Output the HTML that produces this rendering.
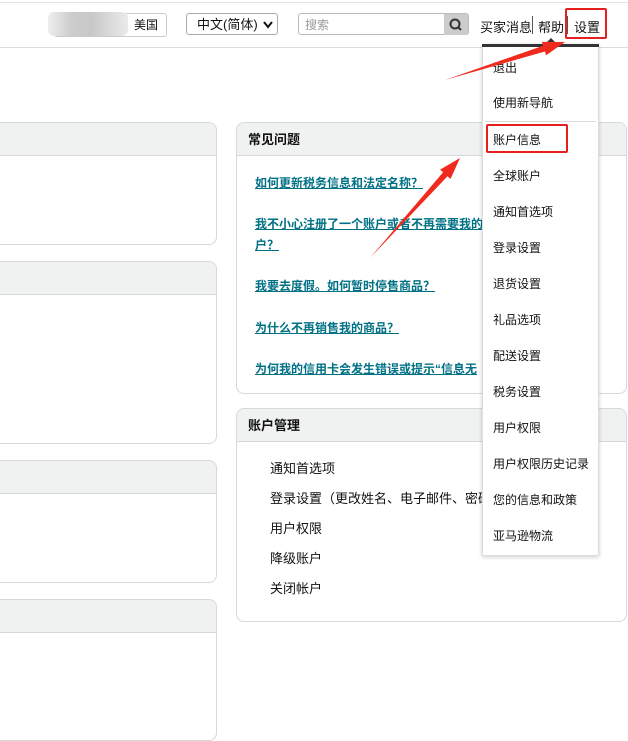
<!DOCTYPE html><html><head><meta charset="utf-8"><style>
body{margin:0;width:628px;height:721px;overflow:hidden;background:#fff;font-family:"Liberation Sans","Noto Sans CJK SC",sans-serif;font-size:13px;color:#111;position:relative}
.a{position:absolute}
.box{position:absolute;border:1px solid #d5d9d9;border-radius:8px;background:#fff;overflow:hidden}
.box .h{height:32px;background:#f0f2f2;border-bottom:1px solid #d5d9d9;font-weight:bold;font-size:13px;line-height:33px;padding-left:11px}
.faq a{position:absolute;left:18px;color:#007185;font-weight:bold;text-decoration:underline;white-space:nowrap;font-size:12px}
.m{position:absolute;left:10px;font-size:12px;color:#111}
.am{position:absolute;left:33px;font-size:13px;color:#111;white-space:nowrap}
</style></head><body>
<div class="a" style="left:0;top:2px;width:628px;height:1px;background:#e3e3e3"></div>
<div class="a" style="left:0;top:47px;width:628px;height:1px;background:#ddd"></div>
<div class="a" style="left:54px;top:13px;width:111px;height:22px;border:1px solid #ccc;border-radius:3px;background:#fff"></div>
<div class="a" style="left:48px;top:12px;width:80px;height:24px;background:linear-gradient(90deg,#eee,#ccc 30%,#c8c8c8 55%,#d8d8d8 75%,#eaeaea);border-radius:6px"></div>
<div class="a" style="left:134px;top:16px;font-size:12px">美国</div>
<div class="a" style="left:186px;top:13px;height:22px;border:1px solid #aaa;border-radius:3px;font-size:13px;line-height:21px;padding-left:10px;box-sizing:border-box;width:92px">中文(简体)<svg style="position:absolute;left:76px;top:7px" width="10" height="8"><polyline points="1,1 5,6 9,1" fill="none" stroke="#111" stroke-width="2"/></svg></div>
<div class="a" style="left:298px;top:13px;width:171px;height:22px;border:1px solid #bbb;border-radius:3px;box-sizing:border-box"></div>
<div class="a" style="left:305px;top:16px;color:#999;font-size:12px">搜索</div>
<div class="a" style="left:444px;top:14px;width:24px;height:21px;background:#ccc"><svg width="24" height="21"><circle cx="11" cy="10" r="4.5" fill="none" stroke="#333" stroke-width="2"/><line x1="14" y1="13" x2="17" y2="16" stroke="#333" stroke-width="2"/></svg></div>
<div class="a" style="left:480px;top:17px;font-size:13px">买家消息</div>
<div class="a" style="left:532px;top:16px;width:1px;height:18px;background:#555"></div>
<div class="a" style="left:538px;top:17px;font-size:13px">帮助</div>
<div class="a" style="left:567px;top:16px;width:1px;height:18px;background:#555"></div>
<div class="a" style="left:574px;top:17px;font-size:13px">设置</div>
<div class="a" style="left:565px;top:8px;width:42px;height:31px;border:2px solid #e62020;border-radius:2px;box-sizing:border-box"></div>

<div class="box" style="left:-10px;top:122px;width:225px;height:121px"><div class="h"></div></div>
<div class="box" style="left:-10px;top:261px;width:225px;height:181px"><div class="h"></div></div>
<div class="box" style="left:-10px;top:460px;width:225px;height:121px"><div class="h"></div></div>
<div class="box" style="left:-10px;top:599px;width:225px;height:140px"><div class="h"></div></div>

<div class="box faq" style="left:236px;top:122px;width:389px;height:270px"><div class="h">常见问题</div>
<a style="top:51px">如何更新税务信息和法定名称？</a>
<a style="top:92px">我不小心注册了一个账户或者不再需要我的</a>
<a style="top:113px">户？</a>
<a style="top:154px">我要去度假。如何暂时停售商品？</a>
<a style="top:196px">为什么不再销售我的商品？</a>
<a style="top:237px">为何我的信用卡会发生错误或提示“信息无</a>
</div>
<div class="box" style="left:236px;top:408px;width:389px;height:212px"><div class="h">账户管理</div>
<div class="am" style="top:49px">通知首选项</div>
<div class="am" style="top:79px">登录设置（更改姓名、电子邮件、密码）</div>
<div class="am" style="top:109px">用户权限</div>
<div class="am" style="top:139px">降级账户</div>
<div class="am" style="top:169px">关闭帐户</div>
</div>

<div class="a" style="left:482px;top:44px;width:115px;height:511px;background:#fff;border:1px solid #ddd;border-top:none;box-shadow:0 1px 4px rgba(0,0,0,.2)">
<div class="a" style="left:-1px;top:0;width:117px;height:3px;background:#333"></div>
<div class="a" style="left:62px;top:-6px;width:0;height:0;border:6px solid transparent;border-bottom-color:#333;border-top:0"></div>
<div class="m" style="top:15px">退出</div>
<div class="m" style="top:50px">使用新导航</div>
<div class="a" style="left:2px;top:77px;width:111px;height:1px;background:#ddd"></div>
<div class="m" style="top:87px">账户信息</div>
<div class="m" style="top:123px">全球账户</div>
<div class="m" style="top:159px">通知首选项</div>
<div class="m" style="top:195px">登录设置</div>
<div class="m" style="top:231px">退货设置</div>
<div class="m" style="top:267px">礼品选项</div>
<div class="m" style="top:303px">配送设置</div>
<div class="m" style="top:339px">税务设置</div>
<div class="m" style="top:375px">用户权限</div>
<div class="m" style="top:411px">用户权限历史记录</div>
<div class="m" style="top:447px">您的信息和政策</div>
<div class="m" style="top:483px">亚马逊物流</div>
</div>
<div class="a" style="left:486px;top:124px;width:82px;height:29px;border:2px solid #e62020;border-radius:2px;box-sizing:border-box"></div>

<svg class="a" style="left:0;top:0" width="628" height="721">
<polygon points="445,80 544.9,51.5 546.1,55.3 565,42 541.9,41.9 543.1,45.7" fill="#f02a1e"/>
<polygon points="370,258 447.5,176.3 450.5,179 460,158 440.1,169.6 443.1,172.3" fill="#f02a1e"/>
</svg>
</body></html>
